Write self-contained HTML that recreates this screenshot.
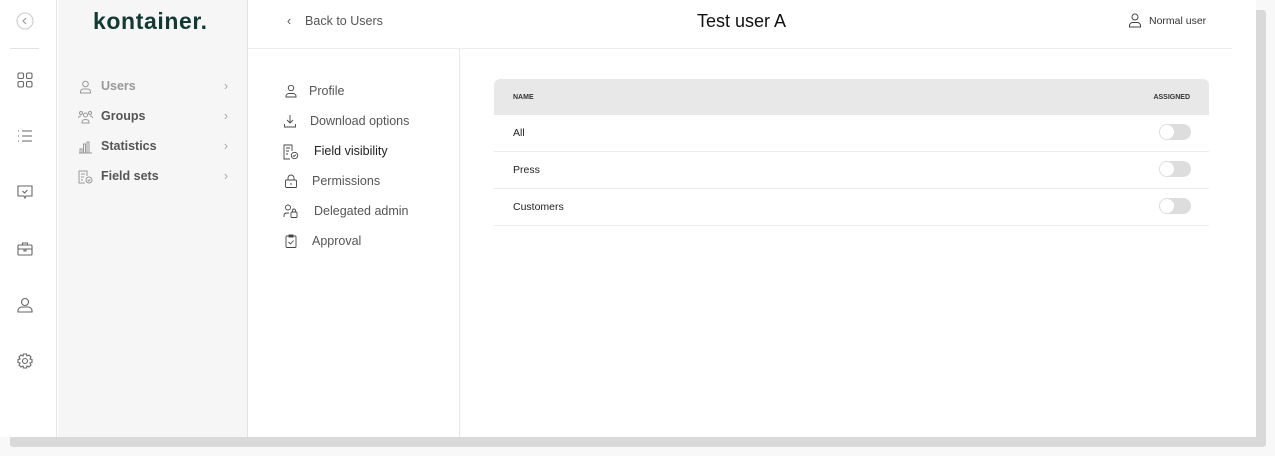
<!DOCTYPE html>
<html><head><meta charset="utf-8"><style>
*{box-sizing:border-box;margin:0;padding:0}
body{width:1275px;height:456px;background:#f8f8f8;font-family:"Liberation Sans",sans-serif;position:relative;overflow:hidden}
.shadow{position:absolute;left:10px;top:10px;width:1256px;height:437px;background:#d9d9d9;border-radius:3px}
.card{position:absolute;left:0;top:0;width:1256px;height:437px;background:#fff}
.rail{position:absolute;left:0;top:0;width:57px;height:437px;border-right:1px solid #e6e6e6;background:#fff}
.rail svg{position:absolute;left:16px;width:18px;height:18px;fill:none;stroke:#666;stroke-width:1.1}
.nav{position:absolute;left:58px;top:0;width:190px;height:437px;background:#f5f6f5;border-right:1px solid #e3e3e3}
.logo{position:absolute;left:35px;top:8px;font-size:23px;font-weight:bold;color:#123a33;letter-spacing:0.6px}
.ni{position:absolute;left:20px;font-size:12.5px;font-weight:bold;color:#555;width:150px}
.ni svg{position:absolute;left:0;top:1px;width:15px;height:14px;fill:none;stroke:#999;stroke-width:1}
.ni span{position:absolute;left:23px}
.ni i{position:absolute;right:0;top:0;font-style:normal;color:#aaa;font-weight:normal}
.hdr{position:absolute;left:248px;top:0;width:984px;height:49px;border-bottom:1px solid #ececec}
.sub{position:absolute;left:248px;top:49px;width:212px;height:388px;border-right:1px solid #e6e6e6}
.si{position:absolute;font-size:12.5px;color:#555}
.si svg{position:absolute;left:-27px;top:0;width:14px;height:14px;fill:none;stroke:#444;stroke-width:0.9}
.tbl{position:absolute;left:494px;top:79px;width:715px}
.th{height:36px;background:#e8e8e8;border-radius:6px 6px 0 0;font-size:7px;font-weight:bold;color:#333;position:relative}
.tr{height:37px;border-bottom:1px solid #ececec;position:relative;font-size:10.5px;color:#222}
.tr span{position:absolute;left:19px;top:12px}
.tg{position:absolute right:18px}
.tg{position:absolute;right:18px;top:9px;width:32px;height:16px;border-radius:8px;background:#ddd}
.tg:after{content:"";position:absolute;left:1px;top:1px;width:14px;height:14px;border-radius:50%;background:#fff}
</style></head><body>
<div class="shadow"></div>
<div class="card">
<div class="rail">
<svg style="left:16px;top:12px" viewBox="0 0 18 18"><circle cx="9" cy="9" r="8" stroke="#ccc"/><path d="M10 6l-3 3 3 3" stroke="#999"/></svg>
<div style="position:absolute;left:10px;top:48px;width:29px;border-top:1px solid #e3e3e3"></div>
<svg style="top:71px" viewBox="0 0 18 18"><rect x="2" y="2" width="5.5" height="5.5" rx="1.5"/><rect x="10.5" y="2" width="5.5" height="5.5" rx="1.5"/><rect x="2" y="10.5" width="5.5" height="5.5" rx="1.5"/><rect x="10.5" y="10.5" width="5.5" height="5.5" rx="1.5"/></svg>
<svg style="top:127px" viewBox="0 0 18 18"><path d="M6 4h10M6 9h10M6 14h10M2 4h1M2 9h1M2 14h1"/></svg>
<svg style="top:183px" viewBox="0 0 18 18"><path d="M2 3h14v10H10l-1 2-1-2H2z"/><path d="M6.5 8l2 2 3-3"/></svg>
<svg style="top:240px" viewBox="0 0 18 18"><rect x="2" y="5" width="14" height="10" rx="1"/><path d="M6.5 5V3h5v2M2 9h14M8 9v2h2V9"/></svg>
<svg style="top:296px" viewBox="0 0 18 18"><circle cx="9" cy="6" r="3.5"/><path d="M2 16v-1.5c0-2 2-3.5 4-3.5h6c2 0 4 1.5 4 3.5V16z"/></svg>
<svg style="top:352px" viewBox="0 0 18 18"><circle cx="9" cy="9" r="2.5"/><path d="M7.5 2h3l.5 2 2-1 2 2-1 2 2 .5v3l-2 .5 1 2-2 2-2-1-.5 2h-3l-.5-2-2 1-2-2 1-2-2-.5v-3l2-.5-1-2 2-2 2 1z"/></svg>
</div>
<div class="nav">
<div class="logo">kontainer.</div>
<div class="ni" style="top:79px"><svg viewBox="0 0 15 14"><circle cx="7.5" cy="4" r="2.8"/><path d="M2.5 13v-1.5c0-1.5 1.5-2.5 3-2.5h4c1.5 0 3 1 3 2.5V13z"/></svg><span style="color:#999">Users</span><i>›</i></div>
<div class="ni" style="top:109px"><svg viewBox="0 0 15 14"><circle cx="7.5" cy="5" r="2"/><circle cx="3" cy="3" r="1.5"/><circle cx="12" cy="3" r="1.5"/><path d="M4 13v-1c0-1.5 1.5-2.5 3.5-2.5S11 10.5 11 12v1zM0.5 8c0-1 1-2 2.5-2M14.5 8c0-1-1-2-2.5-2"/></svg><span>Groups</span><i>›</i></div>
<div class="ni" style="top:139px"><svg viewBox="0 0 15 14"><path d="M2 13V9h2v4M5.5 13V4h2v9M9 13V2h2v11M1 13h13"/></svg><span>Statistics</span><i>›</i></div>
<div class="ni" style="top:169px"><svg viewBox="0 0 15 14"><path d="M9 6V1H1v12h6M3 4h4M3 7h3M3 10h2"/><circle cx="11" cy="10" r="3"/><path d="M9.7 10l1 1 1.6-1.6"/></svg><span>Field sets</span><i>›</i></div>
</div>
<div class="hdr">
<div style="position:absolute;left:39px;top:14px;font-size:12.5px;color:#555">‹&nbsp;&nbsp;&nbsp;&nbsp;Back to Users</div>
<div style="position:absolute;left:449px;top:11px;font-size:18px;color:#111">Test user A</div>
<svg style="position:absolute;left:880px;top:13px;width:14px;height:15px;fill:none;stroke:#444;stroke-width:1" viewBox="0 0 14 15"><circle cx="7" cy="4" r="3"/><path d="M1.5 14v-1.5c0-1.5 1.5-3 3-3h5c1.5 0 3 1.5 3 3V14z"/></svg>
<div style="position:absolute;left:901px;top:15px;font-size:10.5px;color:#333">Normal user</div>
</div>
<div class="sub">
<div class="si" style="left:61px;top:35px"><svg style="left:-25px" viewBox="0 0 14 14"><circle cx="7" cy="4" r="2.7"/><path d="M2 13v-1c0-1.5 1.5-2.5 3-2.5h4c1.5 0 3 1 3 2.5v1z"/></svg>Profile</div>
<div class="si" style="left:62px;top:65px"><svg style="left:-27px" viewBox="0 0 14 14"><path d="M7 1v8M4 6l3 3 3-3M1.5 10v3h11v-3"/></svg>Download options</div>
<div class="si" style="left:66px;top:95px;color:#222"><svg style="left:-31px;width:16px;height:16px" viewBox="0 0 16 16"><path d="M9 7V1H1v14h6M3 4h4M3 7h3M3 10h2"/><circle cx="11.5" cy="11.5" r="3.2"/><path d="M10 11.5l1 1 1.8-1.8"/></svg>Field visibility</div>
<div class="si" style="left:64px;top:125px"><svg style="left:-28px" viewBox="0 0 14 14"><rect x="1.5" y="6" width="11" height="7.5" rx="1"/><path d="M4 6V4a3 3 0 016 0v2M7 9v2"/></svg>Permissions</div>
<div class="si" style="left:66px;top:155px"><svg style="left:-31px;width:16px" viewBox="0 0 16 14"><circle cx="5" cy="3.5" r="2.5"/><path d="M1 13v-1.5c0-1.5 1-2.5 3-2.5h2"/><rect x="8" y="8" width="6" height="5.5" rx="1"/><path d="M9.5 8V6.5a1.5 1.5 0 013 0V8"/></svg>Delegated admin</div>
<div class="si" style="left:64px;top:185px"><svg style="left:-28px" viewBox="0 0 14 14"><rect x="2" y="2" width="10" height="11.5" rx="1"/><path d="M5 1h4v2H5zM4.5 8l2 2 3-3.5"/></svg>Approval</div>
</div>
<div class="tbl">
<div class="th"><span style="position:absolute;left:19px;top:15px">NAME</span><span style="position:absolute;right:19px;top:15px">ASSIGNED</span></div>
<div class="tr"><span>All</span><div class="tg"></div></div>
<div class="tr"><span>Press</span><div class="tg"></div></div>
<div class="tr"><span>Customers</span><div class="tg"></div></div>
</div>
</div>
</body></html>
